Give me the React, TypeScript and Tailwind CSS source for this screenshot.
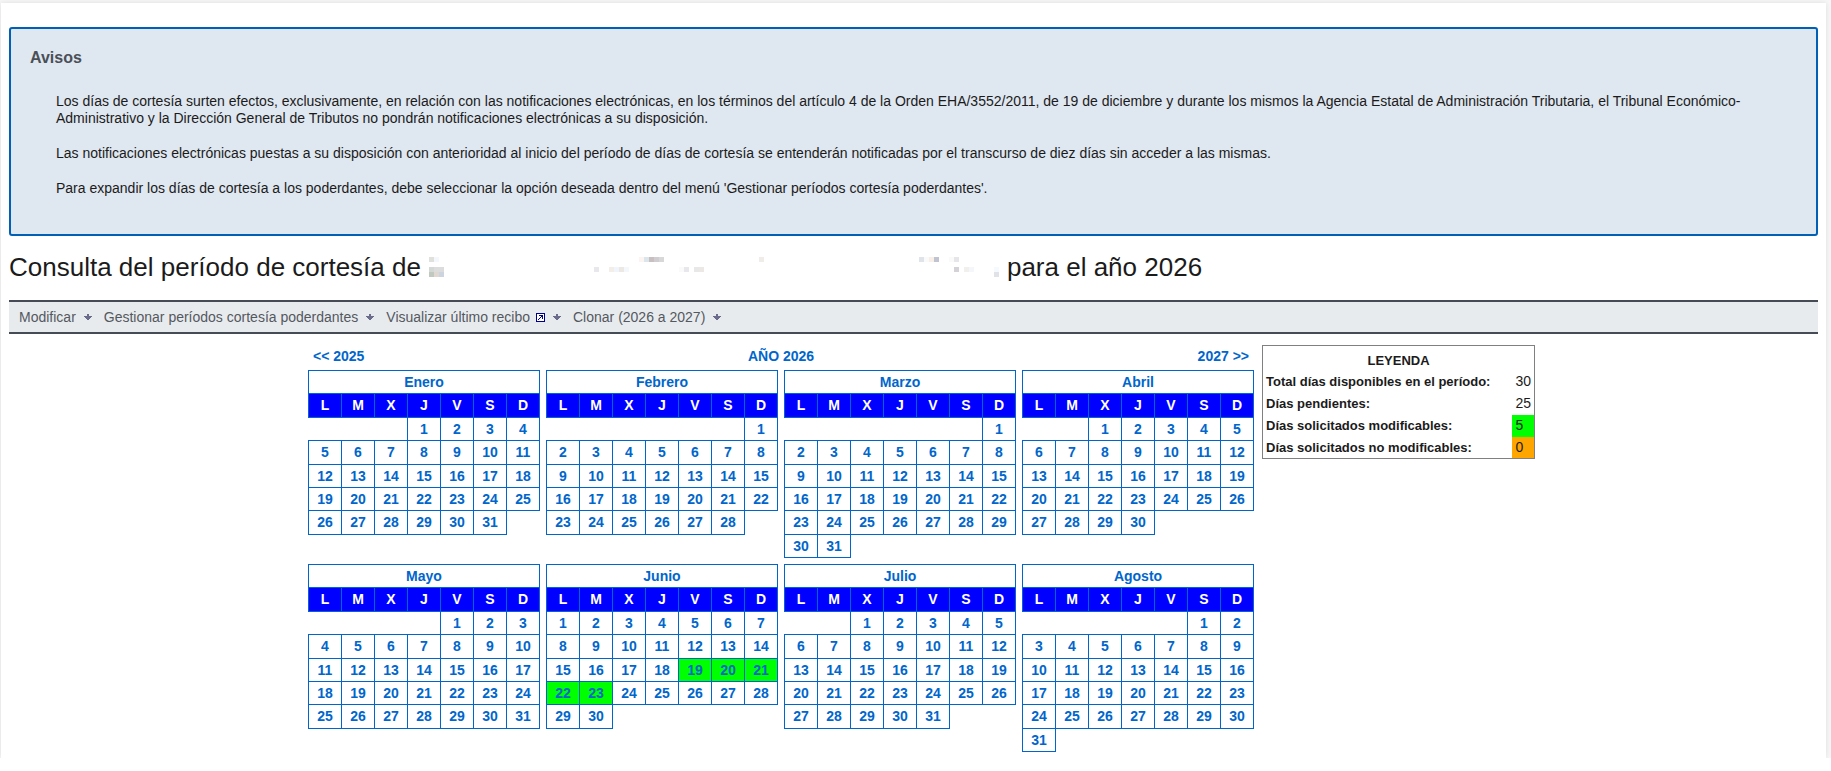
import React from 'react';

type MonthData = { name: string; days: number; offset: number; requested?: number[] };

const weekDays = ['L', 'M', 'X', 'J', 'V', 'S', 'D'];

// offset: empty cells before day 1 (week starts on Monday)
const months: MonthData[] = [
    { name: 'Enero', days: 31, offset: 3 },
    { name: 'Febrero', days: 28, offset: 6 },
    { name: 'Marzo', days: 31, offset: 6 },
    { name: 'Abril', days: 30, offset: 2 },
    { name: 'Mayo', days: 31, offset: 4 },
    { name: 'Junio', days: 30, offset: 0, requested: [19, 20, 21, 22, 23] },
    { name: 'Julio', days: 31, offset: 2 },
    { name: 'Agosto', days: 31, offset: 5 },
];

const notices = [
    'Los días de cortesía surten efectos, exclusivamente, en relación con las notificaciones electrónicas, en los términos del artículo 4 de la Orden EHA/3552/2011, de 19 de diciembre y durante los mismos la Agencia Estatal de Administración Tributaria, el Tribunal Económico-Administrativo y la Dirección General de Tributos no pondrán notificaciones electrónicas a su disposición.',
    'Las notificaciones electrónicas puestas a su disposición con anterioridad al inicio del período de días de cortesía se entenderán notificadas por el transcurso de diez días sin acceder a las mismas.',
    "Para expandir los días de cortesía a los poderdantes, debe seleccionar la opción deseada dentro del menú 'Gestionar períodos cortesía poderdantes'.",
];

const menu = [
    { label: 'Modificar' },
    { label: 'Gestionar períodos cortesía poderdantes' },
    { label: 'Visualizar último recibo', external: true },
    { label: 'Clonar (2026 a 2027)' },
];

const legend = [
    { label: 'Total días disponibles en el período:', value: 30, color: '' },
    { label: 'Días pendientes:', value: 25, color: '' },
    { label: 'Días solicitados modificables:', value: 5, color: 'bg-[#00ff00]' },
    { label: 'Días solicitados no modificables:', value: 0, color: 'bg-[#ffa500]' },
];

// Blocks that hide the holder's name: x, y, colour
const maskBlocks: [number, number, string][] = [
    [0, 0, '#e0e0dc'], [5, 0, '#f4f8fc'],
    [0, 10, '#d4d8d4'], [5, 10, '#dcdcdc'], [10, 10, '#dcdcdc'],
    [0, 15, '#c0c8c0'], [5, 15, '#e0d8d0'], [10, 15, '#ccd4e0'],
    [165, 10, '#e8e8ec'], [180, 10, '#f4eee8'], [185, 10, '#f0f4fc'], [190, 10, '#ece8e4'], [195, 10, '#f4f8fc'],
    [210, 0, '#fcf4f0'], [215, 0, '#dce4ec'], [220, 0, '#c8c0c0'], [225, 0, '#d0ccd0'], [230, 0, '#d8d8d8'],
    [250, 10, '#fafafa'], [255, 10, '#e8e8ec'], [265, 10, '#e8e8e8'], [270, 10, '#ece8e6'],
    [330, 0, '#f0ece8'],
    [490, 0, '#e0e4e8'], [495, 0, '#fafafa'], [500, 0, '#f8f0e8'], [505, 0, '#c0c4d0'],
    [520, 0, '#fafafa'], [525, 0, '#e6e6e8'],
    [525, 10, '#d4d2d6'], [535, 10, '#f2f0ec'], [540, 10, '#f4f6fa'],
    [565, 10, '#f4fafe'], [565, 15, '#e0e2e8'],
];

const NameMask = () => (
    <svg className="h-5 w-[570px] shrink-0" viewBox="0 0 570 20" shapeRendering="crispEdges" aria-hidden="true">
        {maskBlocks.map(([x, y, fill]) => (
            <rect key={`${x}-${y}`} x={x} y={y} width="5" height="5" fill={fill} />
        ))}
    </svg>
);

const Bullet = () => (
    <svg className="h-[6px] w-2" viewBox="0 0 8 6" fill="#6b6b8c" shapeRendering="crispEdges" aria-hidden="true">
        <path d="M3 0h2v2h3v1H7v1H6v1H5v1H3V5H2V4H1V3H0V2h3z" />
    </svg>
);

const ExternalIcon = () => (
    <svg className="h-[9px] w-[9px]" viewBox="0 0 9 9" shapeRendering="crispEdges" aria-hidden="true">
        <rect width="9" height="9" fill="#00008b" />
        <rect x="1" y="1" width="7" height="7" fill="#fff" />
        <path d="M3 2h4v4H6V4H5v1H4v1H3v1H2V6h1V5h1V4h1V3H3z" fill="#00008b" />
    </svg>
);

const Month = ({ name, days, offset, requested = [] }: MonthData) => {
    const weekCount = Math.ceil((offset + days) / 7);
    const weeks = Array.from({ length: weekCount }, (_, w) =>
        weekDays.map((_, d) => w * 7 + d - offset + 1)
    );

    return (
        <table className="w-[232px] table-fixed border-collapse text-center font-bold text-[#0066cc]">
            <thead>
                <tr className="h-[23px]">
                    <th colSpan={7} className="border border-[#0066cc] p-0">{name}</th>
                </tr>
                <tr className="h-6 bg-[#0000ff] text-white">
                    {weekDays.map((day) => (
                        <th key={day} className="border border-[#0066cc] p-0">{day}</th>
                    ))}
                </tr>
            </thead>
            <tbody>
                {weeks.map((week, i) => (
                    <tr key={i} className={i % 3 === 1 ? 'h-6' : 'h-[23px]'}>
                        {week.map((day) =>
                            day < 1 || day > days ? (
                                <td key={day} className="p-0" />
                            ) : (
                                <td
                                    key={day}
                                    className={`border border-[#0066cc] p-0 ${requested.includes(day) ? 'bg-[#00ff00]' : ''}`}
                                >
                                    {day}
                                </td>
                            )
                        )}
                    </tr>
                ))}
            </tbody>
        </table>
    );
};

const App = () => {
    return (
        <div className="overflow-hidden bg-[#f7f7f7] pt-[3px] pr-[5px] pl-px font-['Liberation_Sans',Arial,sans-serif] text-sm leading-[17px] text-[#1b1b1b]">
            <main className="bg-white px-2 pt-6 pb-[6px] shadow-[0_0_5px_#dddddd]">
                <section className="rounded-[3px] border-2 border-[#0060b5] bg-[#dfe7f0] px-[19px] pt-[17px] pb-[37px]">
                    <h2 className="text-base leading-6 font-bold text-[#4a4f57]">Avisos</h2>
                    <div className="mt-[23px] space-y-[18px] pr-2 pl-[26px]">
                        {notices.map((notice) => (
                            <p key={notice}>{notice}</p>
                        ))}
                    </div>
                </section>

                <h1 className="mt-[15px] flex items-center gap-2 text-[26px] leading-8">
                    <span>Consulta del período de cortesía de</span>
                    <NameMask />
                    <span>para el año 2026</span>
                </h1>

                <nav className="mt-[17px] flex h-[34px] items-center gap-3 border-y-2 border-[#464c55] bg-[#e8ebee] px-[10px] text-[#54585f]">
                    {menu.map((item) => (
                        <div key={item.label} className="flex items-center gap-2">
                            <a href="#" className="flex items-center gap-[6px]">
                                {item.label}
                                {item.external && <ExternalIcon />}
                            </a>
                            <Bullet />
                        </div>
                    ))}
                </nav>

                <div className="mt-[11px] flex items-start justify-center gap-2 pl-4">
                    <div>
                        <div className="flex h-[25px] items-center justify-between px-[5px] pb-[2px] font-bold text-[#0066cc]">
                            <a href="#">&lt;&lt; 2025</a>
                            <span>AÑO 2026</span>
                            <a href="#">2027 &gt;&gt;</a>
                        </div>
                        <div className="grid grid-cols-4 items-start gap-[6px]">
                            {months.map((month) => (
                                <Month key={month.name} {...month} />
                            ))}
                        </div>
                    </div>

                    <table className="w-[273px] border border-[#808080] text-left" aria-label="Leyenda">
                        <thead>
                            <tr>
                                <th colSpan={2} className="h-[25px] p-0 pt-[5px] text-center text-[13px] font-bold">LEYENDA</th>
                            </tr>
                        </thead>
                        <tbody>
                            {legend.map((row) => (
                                <tr key={row.label} className="h-[22px]">
                                    <th scope="row" className="p-0 pl-[3px] text-[13px] font-bold">{row.label}</th>
                                    <td className={`w-[22px] p-0 px-[3px] ${row.color}`}>{row.value}</td>
                                </tr>
                            ))}
                        </tbody>
                    </table>
                </div>
            </main>
        </div>
    );
};

export default App;
